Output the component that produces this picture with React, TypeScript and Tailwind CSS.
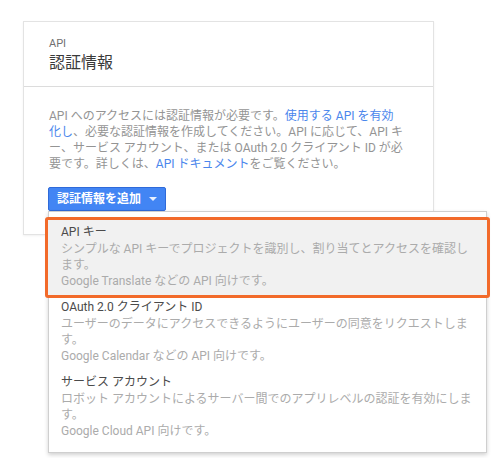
const items = [
  {
    title: "API キー",
    lines: [
      "シンプルな API キーでプロジェクトを識別し、割り当てとアクセスを確認し",
      "ます。",
      "Google Translate などの API 向けです。",
    ],
    active: true,
  },
  {
    title: "OAuth 2.0 クライアント ID",
    lines: [
      "ユーザーのデータにアクセスできるようにユーザーの同意をリクエストしま",
      "す。",
      "Google Calendar などの API 向けです。",
    ],
    active: false,
  },
  {
    title: "サービス アカウント",
    lines: [
      "ロボット アカウントによるサーバー間でのアプリレベルの認証を有効にしま",
      "す。",
      "Google Cloud API 向けです。",
    ],
    active: false,
  },
];

function MenuItem({ title, lines, active }: { title: string; lines: string[]; active: boolean }) {
  return (
    <div className="relative h-[75px] px-[12px] pt-[5px]">
      {active && (
        <div className="absolute -left-[4px] -right-[4px] -top-[2px] -bottom-[4px] rounded-[3px] border-[3px] border-[#f26a2a] bg-[#f1f1f1]" />
      )}
      <div className="relative">
        <p className="text-[12px] leading-[17px] text-[#4a4a4a] whitespace-nowrap">{title}</p>
        {lines.map((l) => (
          <p key={l} className="text-[12px] leading-[16px] text-[#ababab] whitespace-nowrap">
            {l}
          </p>
        ))}
      </div>
    </div>
  );
}

export default function App() {
  return (
    <div className="min-h-[458px] w-[496px] bg-white pl-[23px] pt-[21px] font-['Roboto','Noto_Sans_CJK_JP',sans-serif]">
      <div className="w-[411px] border border-[#e3e3e3] bg-white shadow-[0_1px_2px_rgba(0,0,0,0.06)]">
        <div className="border-b border-[#dcdcdc] px-[25px] pt-[15px] pb-[13px]">
          <p className="text-[11px] leading-[13px] text-[#707070]">API</p>
          <h1 className="mt-[3px] text-[16px] leading-[20px] text-[#3a3a3a]">認証情報</h1>
        </div>
        <div className="px-[25px] pt-[21px] pb-[23px]">
          <div className="text-[12px] leading-[16px] text-[#949494] whitespace-nowrap">
            <p>
              API へのアクセスには認証情報が必要です。
              <span className="text-[#4a86ec]">使用する API を有効</span>
            </p>
            <p>
              <span className="text-[#4a86ec]">化し</span>
              、必要な認証情報を作成してください。API に応じて、API キ
            </p>
            <p>ー、サービス アカウント、または OAuth 2.0 クライアント ID が必</p>
            <p>
              要です。詳しくは、<span className="text-[#4a86ec]">API ドキュメント</span>
              をご覧ください。
            </p>
          </div>
          <div className="relative -ml-[1px] mt-[15px]">
            <button className="flex h-[24px] items-center gap-[8px] rounded-[2px] border border-[#2f6ad9] bg-[#4285f4] pl-[8px] pr-[8px] text-[12px] font-bold text-white">
              認証情報を追加
              <svg width="8" height="4" viewBox="0 0 8 4">
                <path d="M0 0h8L4 4z" fill="#e8f0fe" />
              </svg>
            </button>
            <div className="absolute left-0 top-[24px] z-10 w-[439px] border border-[#cfcfcf] bg-white pt-[7px] pb-[8px] shadow-[0_2px_4px_rgba(0,0,0,0.18)]">
              {items.map((it) => (
                <MenuItem key={it.title} {...it} />
              ))}
            </div>
          </div>
        </div>
      </div>
    </div>
  );
}
